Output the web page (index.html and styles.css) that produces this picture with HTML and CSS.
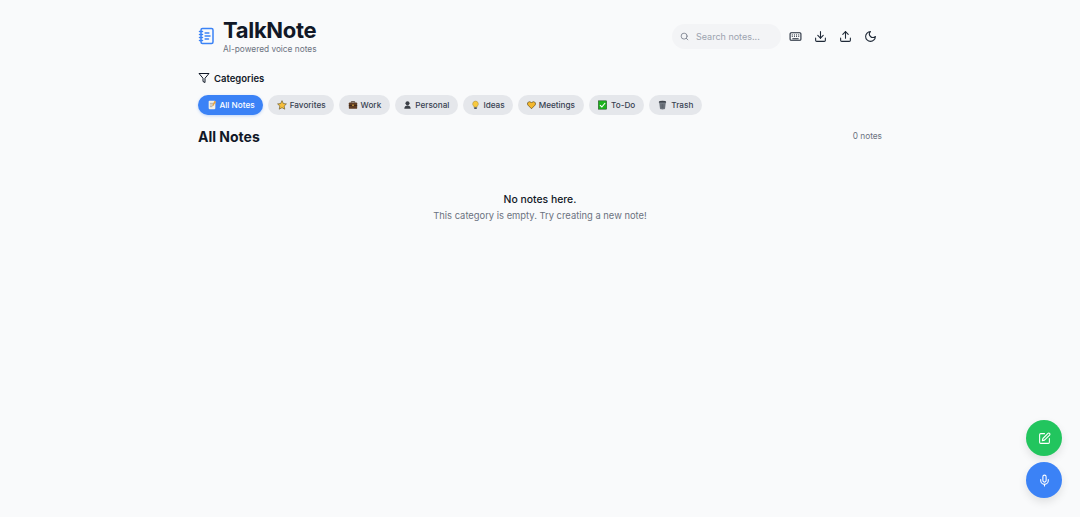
FILE: index.html
```html
<!DOCTYPE html>
<html lang="en">
<head>
<meta charset="utf-8">
<title>TalkNote</title>
<link rel="stylesheet" href="styles.css">
</head>
<body>
<div class="page">
  <header class="header">
    <div class="brand">
      <svg class="logo" viewBox="0 0 24 24" fill="none" stroke="currentColor" stroke-width="2" stroke-linecap="round" stroke-linejoin="round"><path d="M13.4 2H6a2 2 0 0 0-2 2v16a2 2 0 0 0 2 2h12a2 2 0 0 0 2-2V4a2 2 0 0 0-2-2z" /><path d="M2 6h4M2 10h4M2 14h4M2 18h4M9.5 8h5M9.5 12H16M9.5 16H14"/></svg>
      <div>
        <h1 class="title">TalkNote</h1>
        <p class="tagline">AI-powered voice notes</p>
      </div>
    </div>
    <div class="tools">
      <div class="search">
        <svg class="search-icon" viewBox="0 0 24 24" fill="none" stroke="currentColor" stroke-width="2" stroke-linecap="round"><circle cx="11" cy="11" r="8"/><path d="m21 21-4.3-4.3"/></svg>
        <span class="search-text">Search notes...</span>
      </div>
      <svg class="tool" viewBox="0 0 24 24" fill="none" stroke="currentColor" stroke-width="2" stroke-linecap="round" stroke-linejoin="round"><rect x="2" y="5" width="20" height="14" rx="2"/><path d="M6 9h.01M10 9h.01M14 9h.01M18 9h.01M6 12h.01M10 12h.01M14 12h.01M18 12h.01M7 16h10"/></svg>
      <svg class="tool" viewBox="0 0 24 24" fill="none" stroke="currentColor" stroke-width="2" stroke-linecap="round" stroke-linejoin="round"><path d="M21 15v4a2 2 0 0 1-2 2H5a2 2 0 0 1-2-2v-4"/><path d="m7 10 5 5 5-5"/><path d="M12 15V3"/></svg>
      <svg class="tool" viewBox="0 0 24 24" fill="none" stroke="currentColor" stroke-width="2" stroke-linecap="round" stroke-linejoin="round"><path d="M21 15v4a2 2 0 0 1-2 2H5a2 2 0 0 1-2-2v-4"/><path d="m17 8-5-5-5 5"/><path d="M12 3v12"/></svg>
      <svg class="tool" viewBox="0 0 24 24" fill="none" stroke="currentColor" stroke-width="2" stroke-linecap="round" stroke-linejoin="round"><path d="M12 3a6 6 0 0 0 9 9 9 9 0 1 1-9-9Z"/></svg>
    </div>
  </header>

  <section class="categories">
    <div class="cat-label">
      <svg class="filter" viewBox="0 0 24 24" fill="none" stroke="currentColor" stroke-width="2" stroke-linejoin="round"><path d="M22 3H2l8 9.46V19l4 2v-8.54L22 3z"/></svg>
      <span>Categories</span>
    </div>
    <div class="pills">
      <span class="pill active"><svg class="emoji" viewBox="0 0 12 12"><rect x="2" y="1" width="8" height="10" rx="1" fill="#f4f1e6"/><path d="M3.5 4h5M3.5 6h5M3.5 8h3" stroke="#8a8a8a" stroke-width=".8"/><path d="M9 1l2 1.5L7.5 7 6.5 7.3l.1-1.2z" fill="#e8a33d"/></svg>All Notes</span>
      <span class="pill"><svg class="emoji" viewBox="0 0 12 12"><path d="M6 .8l1.6 3.4 3.7.5-2.7 2.6.7 3.7L6 9.2 2.7 11l.7-3.7L.7 4.7l3.7-.5z" fill="#f6bf3c" stroke="#6b5a2b" stroke-width=".8" stroke-linejoin="round"/></svg>Favorites</span>
      <span class="pill"><svg class="emoji" viewBox="0 0 12 12"><path d="M4 3V2h4v1" fill="none" stroke="#3d2a1c" stroke-width="1"/><rect x="1" y="3" width="10" height="7.5" rx="1" fill="#5f3d24"/><rect x="1" y="6" width="10" height=".8" fill="#2f1e12"/><rect x="5" y="5.5" width="2" height="1.6" fill="#d9a441"/></svg>Work</span>
      <span class="pill"><svg class="emoji sm" viewBox="0 0 12 12"><circle cx="6" cy="3.8" r="2.7" fill="#3b3f46"/><path d="M1.8 11c0-3 1.8-4.2 4.2-4.2s4.2 1.2 4.2 4.2z" fill="#3b3f46"/></svg>Personal</span>
      <span class="pill"><svg class="emoji sm" viewBox="0 0 12 12"><path d="M6 .8a3.8 3.8 0 0 0-2.2 6.9V9h4.4V7.7A3.8 3.8 0 0 0 6 .8z" fill="#f8c93f" stroke="#8a6d1d" stroke-width=".5"/><rect x="4.2" y="9" width="3.6" height="2.2" rx=".6" fill="#4d5560"/></svg>Ideas</span>
      <span class="pill"><svg class="emoji sm" viewBox="0 0 12 12"><path d="M6 11 1.3 6.2C-.2 4.4.9 1.6 3.3 1.6c1.3 0 2.2.8 2.7 1.6.5-.8 1.4-1.6 2.7-1.6 2.4 0 3.5 2.8 2 4.6z" fill="#f4b82e" stroke="#4c3a10" stroke-width=".8"/></svg>Meetings</span>
      <span class="pill"><svg class="emoji lg" viewBox="0 0 12 12"><rect x="1" y="1" width="10" height="10" fill="#1cb31c" stroke="#1f3d1f" stroke-width=".6"/><path d="M3 6.2l2.2 2.2L9.2 3.6" fill="none" stroke="#fff" stroke-width="1.4"/></svg>To-Do</span>
      <span class="pill"><svg class="emoji lg" viewBox="0 0 12 12"><ellipse cx="6" cy="2.6" rx="4.4" ry="1.6" fill="#3f454d"/><path d="M2 3l.9 7.2c.1.7 1.5 1.1 3.1 1.1s3-.4 3.1-1.1L10 3z" fill="#737a83"/><path d="M4.2 5l.2 5M6 5v5M7.8 5l-.2 5" stroke="#4a5058" stroke-width=".6"/></svg>Trash</span>
    </div>
  </section>

  <main>
    <div class="list-head">
      <h2 class="list-title">All Notes</h2>
      <span class="count">0 notes</span>
    </div>
    <div class="empty">
      <p class="empty-title">No notes here.</p>
      <p class="empty-text">This category is empty. Try creating a new note!</p>
    </div>
  </main>
</div>

<div class="fabs">
  <button class="fab green"><svg viewBox="0 0 24 24" fill="none" stroke="currentColor" stroke-width="2" stroke-linecap="round" stroke-linejoin="round"><path d="M12 3H5a2 2 0 0 0-2 2v14a2 2 0 0 0 2 2h14a2 2 0 0 0 2-2v-7"/><path d="M18.4 2.6a2.12 2.12 0 0 1 3 3L12 15l-4 1 1-4z"/></svg></button>
  <button class="fab blue"><svg viewBox="0 0 24 24" fill="none" stroke="currentColor" stroke-width="2" stroke-linecap="round" stroke-linejoin="round"><path d="M12 2a3 3 0 0 0-3 3v7a3 3 0 0 0 6 0V5a3 3 0 0 0-3-3z"/><path d="M19 10v2a7 7 0 0 1-14 0v-2"/><path d="M12 19v3"/></svg></button>
</div>
</body>
</html>
```
FILE: styles.css
```css
* { box-sizing: border-box; margin: 0; padding: 0; }
html, body { height: 100%; }
body {
  background: #f9fafb;
  font-family: "Inter", "Liberation Sans", sans-serif;
  color: #111827;
  overflow: hidden;
}
.page { width: 684px; margin: 0 auto; padding-top: 16px; }
.header { display: flex; justify-content: space-between; align-items: center; height: 40px; }
.brand { display: flex; align-items: center; gap: 7px; }
.logo { width: 18px; height: 18px; color: #3b82f6; }
.title { font-size: 22px; font-weight: 700; line-height: 25px; letter-spacing: -.3px; color: #111827; }
.tagline { font-size: 8.3px; line-height: 12px; color: #6b7280; }
.tools { display: flex; align-items: center; margin-right: 5px; }
.search { display: flex; align-items: center; width: 109px; height: 25px; margin-right: 8px; padding-left: 8px; gap: 7px; border-radius: 13px; background: #f3f4f6; }
.search-icon { width: 9px; height: 9px; color: #6b7280; }
.search-text { font-size: 9px; color: #9ca3af; }
.tool { width: 13px; height: 13px; margin-right: 12px; color: #1f2937; }
.tool:last-child { margin-right: 0; }
.categories { margin-top: 15px; }
.cat-label { display: flex; align-items: center; gap: 4px; height: 14px; font-size: 9.5px; font-weight: 600; color: #111827; }
.filter { width: 12px; height: 12px; }
.pills { display: flex; gap: 5px; margin-top: 10px; }
.pill { display: flex; align-items: center; height: 20px; padding: 0 8.5px; gap: 3px; border-radius: 10px; background: #e5e7eb; color: #374151; font-size: 8.2px; font-weight: 500; white-space: nowrap; }
.pill.active { background: #3b82f6; color: #fff; box-shadow: 0 1px 3px rgba(59,130,246,.3); }
.emoji { width: 10px; height: 10px; flex: none; }
.emoji.sm { width: 9px; }
.emoji.lg { width: 11px; }
.list-head { display: flex; justify-content: space-between; align-items: center; margin-top: 11px; height: 20px; }
.list-title { font-size: 14px; font-weight: 700; color: #111827; }
.count { font-size: 8.3px; color: #6b7280; }
.empty { text-align: center; margin-top: 46px; }
.empty-title { font-size: 10.4px; font-weight: 500; line-height: 16px; color: #111827; }
.empty-text { font-size: 9.4px; line-height: 16px; color: #6b7280; }
.fabs { position: fixed; right: 18px; bottom: 19px; display: flex; flex-direction: column; gap: 6px; }
.fab { width: 36px; height: 36px; border: 0; border-radius: 50%; color: #fff; display: flex; align-items: center; justify-content: center; box-shadow: 0 4px 8px rgba(0,0,0,.1); }
.fab svg { width: 13px; height: 13px; }
.green { background: #22c55e; }
.blue { background: #3b82f6; }
```
